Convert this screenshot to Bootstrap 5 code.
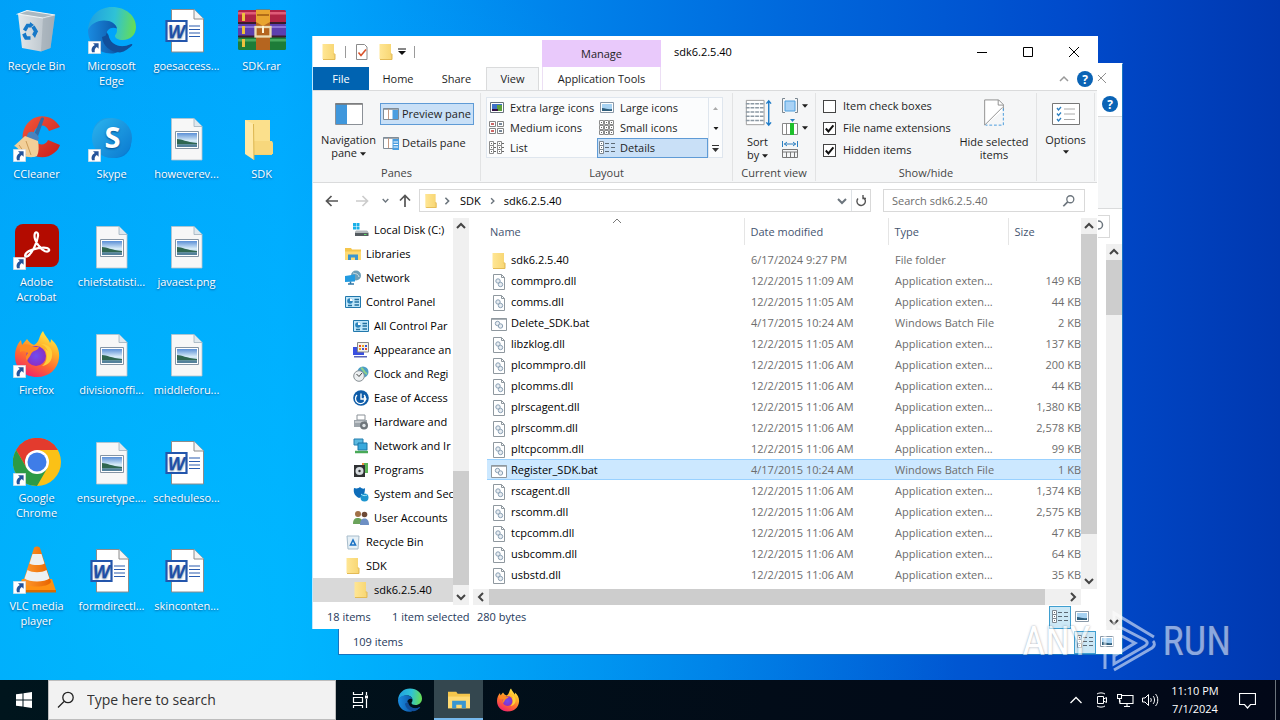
<!DOCTYPE html>
<html lang="en">
<head>
<meta charset="utf-8">
<meta name="viewport" content="width=device-width, initial-scale=1">
<title>Desktop</title>
<link href="https://cdn.jsdelivr.net/npm/bootstrap@5.3.0/dist/css/bootstrap.min.css" rel="stylesheet">
<style>
:root{--line:#dadbdc;--ribbon:#f5f6f7;--sel:#cce8ff;--pick:#c9e0f7;--pickline:#5f9bd6}
body{font-family:"Open Sans","Noto Sans",sans-serif;font-size:11px;line-height:16px;color:#1e1e1e;height:100vh;overflow:hidden;background:#0a8ff0}
button{background:none;border:0;padding:0;color:inherit;font-size:inherit;line-height:inherit}
svg{display:block;flex:none}
a{color:inherit;text-decoration:none}
.desk{background:radial-gradient(ellipse 60% 100% at 15% 90%,rgba(0,190,255,.75),transparent),linear-gradient(90deg,#009ff8 0,#00a6ff 22%,#008cf0 38%,#0068dc 62%,#004acb 84%,#0038b0 100%)}
/* desktop shortcuts */
.shortcuts{display:grid;grid-auto-flow:column;grid-template-rows:repeat(6,108px);grid-auto-columns:75px;justify-content:start}
.shortcut{display:flex;flex-direction:column;padding-top:6px;color:#fff;line-height:15px;text-shadow:0 1px 2px rgba(0,50,110,.7);white-space:nowrap}
.shortcut .pic{position:relative;width:48px;height:48px;margin:0 0 4px 13px}
.shortcut .pic .arrow{position:absolute;left:0;bottom:0}
.shortcut .title{width:100%;text-align:center;padding-right:2px}
/* windows */
.win{position:absolute;background:#fff}
.win-main{left:312px;top:36px;right:182px;bottom:51px;border-left:1px solid #bfe6fb;border-right:1px solid #fff}
.win-back{left:338px;top:63px;right:157px;bottom:25px;border:1px solid #1874c0;border-top-color:#fff}
.titlebar{height:31px;flex:none}
.manage{width:119px;height:27px;background:#e9c9fb;margin-top:4px}
.wintitle{padding-left:13px;color:#000}
.capbtn{width:46px;height:31px;display:grid;place-items:center}
.vline{width:1px;height:12px;background:#9a9a9a}
.tabs{height:23px;flex:none}
.tabs .tab{height:23px;padding:0;text-align:center}
.tab-file{width:56px;background:#0063b1;color:#fff}
.tab-on{width:53px;background:var(--ribbon);border:1px solid var(--line);border-bottom:0}
.tab-tool{width:119px;margin-left:3px;border:1px solid #ecdff4;border-top:0;border-bottom:0}
.ribbon{height:93px;flex:none;background:var(--ribbon);border-top:1px solid var(--line);border-bottom:1px solid var(--line)}
.group{position:relative;border-right:1px solid #e2e3e4;display:flex;flex-direction:column;margin:2px 0 1px}
.group-body{flex:1;display:flex}
.group-name{text-align:center;height:16px;color:#444;white-space:nowrap}
.big{display:flex;flex-direction:column;align-items:center;justify-content:flex-start;line-height:13px;text-align:center;padding-top:10px}
.big-tall{padding-top:6px}
.pane-btns{display:flex;flex-direction:column;gap:7px;padding-top:10px}
.pane-btn{width:94px;height:22px;display:flex;align-items:center;gap:3px;padding-left:2px;border:1px solid transparent;white-space:nowrap}
.pane-btn.on,.gal .on{background:var(--pick);border-color:var(--pickline)}
.gallery{width:237px;height:61px;border:1px solid #dfe6ee;background:#fbfcfd;margin:4px 0 0 5px}
.gal{display:grid;grid-template-columns:110px 111px;grid-template-rows:repeat(3,20px);flex:1}
.gal button{display:flex;align-items:center;gap:5px;padding-left:1px;border:1px solid transparent;white-space:nowrap;line-height:18px}
.gal-scroll{width:14px;border-left:1px solid #dfe6ee}
.gal-scroll button{display:grid;place-items:center;height:20px;width:13px}
.tick{appearance:none;width:13px;height:13px;border:1px solid #444;background:#fff;margin:0;flex:none}
.tick:checked{background:#fff url("data:image/svg+xml,%3Csvg xmlns='http://www.w3.org/2000/svg' viewBox='0 0 11 11'%3E%3Cpath d='M1.8 5.5 4.4 8.4 9.4 2.4' fill='none' stroke='%23111' stroke-width='2'/%3E%3C/svg%3E")}
.ticks{width:136px;padding:2px 0 0 7px}
.ticks label{display:flex;align-items:center;gap:7px;height:22px;white-space:nowrap}
.navrow{height:35px;flex:none;padding:6px 12px 0 0}
.addr{height:23px;border:1px solid #d9d9d9;color:#000}
.search{width:202px;height:23px;border:1px solid #d9d9d9}
.search input{border:0;outline:0;background:none;width:150px;padding:0 0 0 8px;color:#444}
.search input::placeholder{color:#6d6d6d;opacity:1}
.panes{flex:1 1 0;min-height:0;overflow:hidden}
.tree{width:140px;flex:none;overflow:hidden;color:#000}
.tree a{display:flex;align-items:center;gap:5px;height:24px;padding-left:32px;white-space:nowrap}
.tree a.sub{padding-left:40px}
.tree a.on{background:#d9d9d9}
.bar-v{width:16px;flex:none;background:#f0f0f0;display:flex;flex-direction:column;align-items:center;color:#444}
.bar-v .thumb{width:100%;background:#cdcdcd}
.bar-v button,.bar-h button{width:16px;height:16px;display:grid;place-items:center;flex:none}
.bar-h{height:16px;flex:none;background:#f0f0f0;display:flex;color:#444}
.bar-h .thumb{background:#cdcdcd}
.filepane{padding-left:14px}
.files{table-layout:fixed;margin:0;--bs-table-bg:transparent;border:0}
.files th{height:27px;padding:0 0 0 6px;font-weight:400;color:#44546f;border:0;border-right:1px solid #e5e5e5;vertical-align:middle}
.files th:first-child{padding-left:3px}
.files th:last-child{border:0}
.files tbody::before{content:"";display:block;height:4px}
.files td{height:21px;padding:0 0 0 7px;border:0;color:#6d6d6d;white-space:nowrap;line-height:19px;vertical-align:middle}
.files td:first-child{padding-left:4px;color:#000}
.files td:last-child{text-align:right;padding:0}
.files td svg{display:inline-block;margin-right:4px}
.files tr.on td{background:var(--sel);box-shadow:inset 0 1px #99d1ff,inset 0 -1px #99d1ff}
.status{height:24px;flex:none;color:#1e395b;padding-left:14px}
.viewbtn{width:22px;height:23px;display:grid;place-items:center;border:1px solid transparent}
.viewbtn.on{background:#cce8f6;border-color:#3f9fd0}
/* watermark */
.brand{position:absolute;right:49px;bottom:6px;color:#fff;opacity:.55;font-family:"Roboto Condensed","Open Sans Condensed","Roboto",sans-serif;font-size:40px;line-height:44px;text-shadow:0 0 2px #3c4a64}
/* taskbar */
.taskbar{height:40px;background:linear-gradient(90deg,#00151d,#020c18 60%,#020818);color:#fff;flex:none}
.taskbar button{height:40px;display:grid;place-items:center}
.startbtn{width:48px}
.tasksearch{width:288px;background:#f2f2f2;border:1px solid #bdbdbd}
.tasksearch input{border:0;outline:0;background:none;font-size:14px;line-height:22px;color:#333;width:230px;padding:0}
.tasksearch input::placeholder{color:#333;opacity:1}
.app{width:49px}
.app.on{background:#34474f;box-shadow:inset 0 -2px #76b9ed}
.clock{line-height:18px;text-align:center;width:64px}
</style>
</head>
<body class="d-flex flex-column">

<svg width="0" height="0" class="position-absolute" aria-hidden="true">
<defs>
<linearGradient id="gFold" x1="0" x2="1"><stop offset="0" stop-color="#ffe694"/><stop offset="1" stop-color="#f8d775"/></linearGradient>
<linearGradient id="gSky" x1="0" y1="0" x2="0" y2="1"><stop offset="0" stop-color="#5b8fd6"/><stop offset=".55" stop-color="#d8ecf8"/><stop offset="1" stop-color="#9cc3dc"/></linearGradient>
<linearGradient id="gEdge" x1="0" x2="1" y1=".3" y2=".4"><stop offset="0" stop-color="#1f9fe0"/><stop offset=".55" stop-color="#2fc2d6"/><stop offset="1" stop-color="#66dd55"/></linearGradient>
<linearGradient id="gEdge2" x1="0" x2="1"><stop offset="0" stop-color="#1a8be0"/><stop offset="1" stop-color="#0c55a6"/></linearGradient>
<linearGradient id="gFox" x1=".8" y1="0" x2=".3" y2="1"><stop offset="0" stop-color="#fff34a"/><stop offset=".35" stop-color="#ffb02a"/><stop offset=".65" stop-color="#ff6a30"/><stop offset="1" stop-color="#f0216c"/></linearGradient>
<radialGradient id="gFoxIn"><stop offset="0" stop-color="#6f4df0"/><stop offset="1" stop-color="#8a2fc4"/></radialGradient>
<linearGradient id="gSkype" x1="0" x2="1" y2="1"><stop offset="0" stop-color="#2bb4ee"/><stop offset="1" stop-color="#0a78cf"/></linearGradient>
<linearGradient id="gBin" x1="0" x2="1"><stop offset="0" stop-color="#e3e8eb"/><stop offset="1" stop-color="#aeb9c2"/></linearGradient>
<linearGradient id="gCone" x1="0" x2="1"><stop offset="0" stop-color="#ff9a2e"/><stop offset="1" stop-color="#e86400"/></linearGradient>
<linearGradient id="gCC" x1="0" x2="1" y2="1"><stop offset="0" stop-color="#f4573b"/><stop offset="1" stop-color="#c81e1a"/></linearGradient>
<symbol id="arrow" viewBox="0 0 13 13"><path fill="#fff" stroke="#c9d3dc" stroke-width=".6" d="M.3.3h12.4v12.4H.3z"/><path d="M5 2.200h5.600v5.600L8.800 6C6.800 7.200 6.400 9 6.800 11.200H4C2.800 8 4 5.500 6.800 4z" fill="#24549b"/></symbol>
<symbol id="recycle" viewBox="0 0 48 48"><path d="M5 8 14 4.500 42 9 37.500 42 28 45.500 9 42z" fill="url(#gBin)"/><path d="M5 8 14 4.500 42 9 30 12z" fill="#aab8c1" stroke="#eef3f5" stroke-width="1.200"/><path d="m30 12 12-3-4.500 33L28 45.500z" fill="#8f9ba5" opacity=".4"/><g fill="none" stroke="#1678c8" stroke-width="3.600"><path d="m11.500 24.500 3-5h4M20 20.500l3 5-2 3M17.500 32H13l-2-3.500"/></g><path d="m17 16 4 3-4.500 3zM24 27l-5 1 3 4zM9 28.500l4-2 .5 5z" fill="#1678c8"/></symbol>
<symbol id="edge" viewBox="0 0 48 48"><path fill="url(#gEdge)" d="M0 24C1 10 11 1 24 1c14 0 24 9 24 20 0 8-6 13-13 13-5 0-8-2-8-4 0-1.500 2-2 2-6 0-5-5-9-11-9C9 15 2 20 0 24z"/><path fill="url(#gEdge2)" d="M0 24c2-5 8-9.500 16-9.500 7 0 12 3.500 13 8C23 20 18 24 18 30c0 8 6 13 13 15-2 2-5 2.500-8 2.500C9 47 0 37 0 24z"/><path fill="#114f9b" d="M18.500 26c-3 10 3 17 13 18 5 .4 9-1.500 12-4 1.500-1.500.5-2.500-1-1.700C33 43 22 39 20.500 29z"/><path fill="#114f9b" d="M14 31c1 9 8 15 18 15.500 5-1 9.500-4 12.500-8.500-8 5-22 4-25-9z"/></symbol>
<symbol id="word" viewBox="1 0 48 48"><path d="M9.500 3.500H32l9.500 9.500v33H9.500z" fill="#fff" stroke="#8c8c8c"/><path d="M32 3.500V13h9.500" fill="#f4f4f4" stroke="#8c8c8c"/><path d="M27 20h11M27 23.500h11M27 27h11M27 30.500h11" stroke="#2a5cb0" stroke-width="1.200"/><path d="M4.500 15h20v20h-20z" fill="#fff" stroke="#2456ac" stroke-width="2.200"/><text x="14.500" y="31.500" text-anchor="middle" font-family="Liberation Sans" font-size="18" font-weight="700" font-style="italic" fill="#1f4fa8">W</text></symbol>
<symbol id="image" viewBox="1 0 48 48"><path d="M9.500 4.500H32l8 8V46H9.500z" fill="#f7f7f7" stroke="#b9c3ca" stroke-width=".8"/><path d="M32 4.500v8h8" fill="#dfe8ee" stroke="#9fb0bc" stroke-width=".8"/><path d="M13.500 17.500h23v17h-23z" fill="#fff" stroke="#8494a4"/><path d="M15 19h20v14H15z" fill="url(#gSky)"/><path d="M15 25c5 0 9 3 20 4v1.500H15z" fill="#2f6650"/><path d="M15 30.500h20V33H15z" fill="#54819b"/></symbol>
<symbol id="rar" viewBox="0 0 48 48"><rect y="4" width="48" height="13" rx="1.500" fill="#b02445"/><path d="M0 6h48v2.500H0z" fill="#df5c78"/><rect y="18" width="48" height="12" rx="1.500" fill="#5d3fae"/><path d="M0 20h48v2H0z" fill="#8d74d6"/><rect y="31" width="48" height="13" rx="1.500" fill="#1d7c38"/><path d="M0 33h48v2.500H0z" fill="#48a95e"/><path d="M0 16h48v2H0zM0 29.500h48v2H0z" fill="#3a1c2b"/><path d="M4 7h3v8H4zM4 20h3v8H4zM4 33h3v8H4z" fill="#eec23e"/><path d="M18 3.500h14v40.500H18z" fill="#b5651f"/><path d="M18 4h14v12l-7 4-7-4z" fill="#e9a52f"/><path d="M19 9h12" stroke="#9c5b12" stroke-width="1.500"/><rect x="17.500" y="21" width="15" height="9.500" fill="none" stroke="#ecdcb4" stroke-width="2.300"/><path d="M25 20v7" stroke="#fff6d8" stroke-width="2"/></symbol>
<symbol id="ccleaner" viewBox="0 0 48 48"><path d="M47 13C41 2 27-1 18 6 9 13 7 25 13 35c6 9 20 11 28 4 3-2 5-5 6-8l-12-5c-2 5-8 6-12 2-4-5-3-12 2-15 4-3 9-1 11 4z" fill="url(#gCC)"/><path d="M28 4c2-1 3 0 3 1L24 25l-4-2z" fill="#336ba6"/><path d="M15 19c4-3 9 0 11 5l-2 4-11-4z" fill="#4a83be"/><path d="M12 22 1 32c4 1 6 6 9 10 4 1 10 2 14 0 2-4 2-10 1-15z" fill="#f2cf98"/><path d="m6 31 7 10M13 27l5 14" stroke="#c99a58" fill="none"/></symbol>
<symbol id="skype" viewBox="0 0 48 48"><circle cx="20" cy="19" r="15" fill="#1e9fe4"/><circle cx="28" cy="29" r="15" fill="#0b7dd2"/><circle cx="24" cy="24" r="20" fill="url(#gSkype)"/><text x="24.500" y="34" text-anchor="middle" font-family="Open Sans" font-size="29" font-weight="700" fill="#fff">S</text></symbol>
<symbol id="folderbig" viewBox="2 0 48 48"><path d="M9 6h25v21l2 3v11H13z" fill="#f5d273"/><path d="M9 6h25v30H9z" fill="#fbe08c"/><path d="M34 27h2l1 2v11H18V27z" fill="#f7d77c"/><path d="m9 6 9 4v36l-9-6z" fill="#ffe9a6"/><path d="m17.500 10 .5 36" stroke="#dcb64e"/></symbol>
<symbol id="acrobat" viewBox="0 0 48 48"><rect x="2" y="2" width="44" height="43" rx="8" fill="#b30b00"/><path d="M21.500 14c0-5 4-5 3.500 0-.8 7-6 17-10 20-4 2-4-2 1-5 5-2.500 14-4 18-3 4 1.500 2 4.500-2 3.200-5-2.200-10.500-10.200-10.500-15.200z" fill="none" stroke="#fff" stroke-width="2.200"/></symbol>
<symbol id="firefox" viewBox="0 0 48 48"><path d="M30 1c2 5 6 8 7 12 1-2 1-3 .8-4C44 14 47 21 46 28c-1 11-10 19-22 19C11 47 2 38 2 26c0-7 3-13 6-16l1 5 5-6c2 3 4 5 7 6 2-1 4-3 5-6 1-3 2-6 4-8z" fill="url(#gFox)"/><circle cx="23" cy="26" r="10" fill="url(#gFoxIn)"/><path d="M7 16c5-3 10-2 13 1h6c-1 4-6 3-8 7-1 3-3 4-4 7-2-3-1-6 1-8-3-2-6-2-8-1z" fill="#ff8b22"/><path d="M24 14c5-1 9 2 11 7l-3-2c3 7 2 13-3 17 7-1 11-6 10-14-1-6-7-9-15-8z" fill="#ffcf3a"/></symbol>
<symbol id="chrome" viewBox="0 0 48 48"><circle cx="24" cy="24" r="24" fill="#fbc116"/><path d="M24 24 3.200 12A24 24 0 0 1 44.800 12H24z" fill="#e33b2e"/><path d="M24 24V12h20.800A24 24 0 0 0 3.200 12l10.400 18z" fill="#e33b2e"/><path d="M3.200 12A24 24 0 0 0 24 48l10.400-18L24 36 13.600 30z" fill="#2c9a46"/><circle cx="24" cy="24" r="12" fill="#fff"/><circle cx="24" cy="24" r="9.500" fill="#3f7de8"/></symbol>
<symbol id="vlc" viewBox="0 0 48 48"><path d="M9 33h30l4 12H5z" fill="#ff9112"/><path d="M5 44h38v2.500H5z" fill="#d96b00"/><path d="M21 2c1-2 5-2 6 0l11 34c-3 6-25 6-28 0z" fill="url(#gCone)"/><path d="M19.500 8h9l3 9.500c-3 2-12 2-15 0zM14.500 24c5 3 14 3 19 0l3 8.500c-5 4-20 4-25 0z" fill="#eef0f1"/></symbol>
<symbol id="folder" viewBox="0 0 16 16"><path d="M2 0h11v10l1 1v5H3z" fill="#f3cf6c"/><path d="M1.500 0h11.500v15H1.500z" fill="url(#gFold)"/><path d="M12.500 10h1.500v5.500H2" fill="none" stroke="#e3ba55"/></symbol>
<symbol id="props" viewBox="0 0 16 16"><path d="M2.500.5h8L13 3v12.500H2.500z" fill="#fff" stroke="#8b8b8b"/><path d="m4.500 8.500 2.500 3 5-6" fill="none" stroke="#d9532c" stroke-width="1.600"/></symbol>
<symbol id="dll" viewBox="0 0 16 16"><path d="M2.500.5h8L13.500 3.500v12h-11z" fill="#fff" stroke="#8f989f"/><path d="M10.500.5v3h3" fill="none" stroke="#8f989f"/><circle cx="7" cy="7" r="2.200" fill="#e8edf2" stroke="#8aa0b4"/><circle cx="9.500" cy="10.500" r="2.200" fill="#e8edf2" stroke="#8aa0b4"/></symbol>
<symbol id="bat" viewBox="0 0 16 16"><path d="M.5 2.500h15v12H.5z" fill="#fff" stroke="#8f989f"/><path d="M.5 3h15" stroke="#8f989f" stroke-width="1.500"/><circle cx="6.500" cy="7.500" r="2.200" fill="#e8edf2" stroke="#8aa0b4"/><circle cx="9.500" cy="10" r="2.200" fill="#e8edf2" stroke="#8aa0b4"/></symbol>
<symbol id="disk" viewBox="0 0 16 16"><path d="M0 1h3v3H0zM3.500 1h3v3h-3zM0 4.500h3v3H0zM3.500 4.500h3v3h-3z" fill="#19b0e8"/><path d="M3 9h11l1.500 2v3H2v-3z" fill="#555b60"/><path d="M3 8.500h11l1.500 2.500H2z" fill="#b5babd"/><path d="M11 12.500h2.500" stroke="#5ee06a"/></symbol>
<symbol id="libs" viewBox="0 0 16 16"><path d="M0 2h6l1 1.500h9V14H0z" fill="#f5c64c"/><path d="M0 5.500h16V14H0z" fill="#ffda73"/><path d="M3 14V8.500h10V14h-3v-2.500H6V14z" fill="#3a96d0"/></symbol>
<symbol id="net" viewBox="0 0 16 16"><circle cx="11" cy="5.500" r="5" fill="#6d9fb8"/><path d="M8 3c2 1 5 0 6 4" stroke="#cfe3ec" fill="none"/><path d="m0 6 10-1.500v7L0 12z" fill="#239be0"/><path d="M3 14h6M5.500 11.500V14" stroke="#3078a8" stroke-width="1.500"/></symbol>
<symbol id="cpl" viewBox="0 0 16 16"><path d="M.5 2.500h15v11H.5z" fill="#bfe6fa" stroke="#2278ac"/><circle cx="5" cy="7" r="2.800" fill="#2b83bb"/><path d="M5 7V4.200A2.800 2.800 0 0 1 7.800 7z" fill="#fff"/><path d="M9.500 5.500H14M9.500 8H14M9.500 11H14M3 11.500h4" stroke="#22709e" stroke-width="1.300"/></symbol>
<symbol id="appear" viewBox="0 0 16 16"><path d="M0 5h11v8H0z" fill="#3a4fe0"/><path d="M4.500.5h11v9.500h-11z" fill="#f5f3e8" stroke="#888"/><path d="M6 3h2v2H6zM12 6h2v2h-2z" fill="#e5472c"/><path d="M9 3h2v2H9zM6 6h2v2H6z" fill="#f0a020"/><path d="M12 3h2v2h-2zM9 6h2v2H9z" fill="#4053d0"/><path d="M1 14h13v1.500H1z" fill="#5964b8"/></symbol>
<symbol id="clocki" viewBox="0 0 16 16"><circle cx="10" cy="6" r="5.500" fill="#4c9dc6"/><path d="M8 2c3 1 2 4 6 6" stroke="#8fd08a" stroke-width="2" fill="none"/><circle cx="6" cy="10" r="5.300" fill="#eceff1" stroke="#878f94"/><path d="M3.500 8 6 10.500 9 7" fill="none" stroke="#444"/></symbol>
<symbol id="ease" viewBox="0 0 16 16"><circle cx="8" cy="8" r="7.800" fill="#0e5ca8"/><path d="M4 5a5 5 0 1 0 7 0M8 3.500V9h5M11 7l2 2-2 2" fill="none" stroke="#fff" stroke-width="1.300"/></symbol>
<symbol id="hard" viewBox="0 0 16 16"><path d="M4 1h8v5H4z" fill="#fff" stroke="#8b9298"/><path d="M1 6h13v7H1z" fill="#9da5ab"/><path d="M2 8h9" stroke="#e8eaec"/><circle cx="11" cy="11.500" r="4" fill="#6f767b"/><circle cx="11" cy="11.500" r="1.700" fill="#dfe5e8"/></symbol>
<symbol id="neti" viewBox="0 0 16 16"><path d="M1 1h9v6H1z" fill="#5bb9e0" stroke="#257fae"/><path d="M5 5h9v7H5z" fill="#39a9dc" stroke="#1b75a6"/><path d="M2 14h13" stroke="#49a957" stroke-width="2.500"/></symbol>
<symbol id="prog" viewBox="0 0 16 16"><path d="M9 1h5v6H9z" fill="#ef8b3c"/><path d="M11 1h4v10h-4z" fill="#5bb556"/><path d="M1 3h11v12H1z" fill="#303234"/><circle cx="6.500" cy="9" r="4" fill="#d7dcdf"/><circle cx="6.500" cy="9" r="1.200" fill="#303234"/></symbol>
<symbol id="sec" viewBox="0 0 16 16"><path d="M1 2c3 1 5 0 6-1 2 2 4 2 5 1 0 6-2 9-6 10C2 10 0 7 1 2z" fill="#0d6dba"/><circle cx="11.500" cy="11.500" r="4" fill="#1c95cf"/><path d="M8 8c2 2 4 2 6 1" stroke="#a8e4f8" fill="none"/></symbol>
<symbol id="users" viewBox="0 0 16 16"><circle cx="5" cy="4" r="3" fill="#a17148"/><path d="M0 14c0-5 2-6 5-6s5 2 5 6z" fill="#6ba35b"/><circle cx="11.500" cy="4.500" r="2.800" fill="#6d4a36"/><path d="M7 15c0-5 2-6.500 4.500-6.500S16 10 16 15z" fill="#6d8fc4"/></symbol>
<symbol id="bin16" viewBox="0 0 16 16"><path d="M2 2h12l-1 13H3z" fill="#e6f0f6" stroke="#a7bccb"/><path d="m5.500 11 2.500-5 2.500 5z" fill="none" stroke="#1b72c4" stroke-width="1.600"/></symbol>
<symbol id="preview" viewBox="0 0 16 14"><path d="M.5 1.500h15v11H.5z" fill="#fff" stroke="#7f8b96"/><path d="M.5 2h15" stroke="#7f8b96" stroke-width="1.500"/><path d="M9.500 3H15v9H9.500z" fill="#4b9ee0"/><path d="M5.500 2v10" stroke="#c59a83"/></symbol>
<symbol id="detailsp" viewBox="0 0 16 14"><path d="M.5 1.500h15v11H.5z" fill="#fff" stroke="#7f8b96"/><path d="M.5 2h15" stroke="#7f8b96" stroke-width="1.500"/><path d="M9.500 3H16v11H9.500z" fill="#4b9ee0"/><path d="M10.500 6H15M10.500 8.500H15M10.500 11H15" stroke="#fff"/><path d="M5.500 2v10" stroke="#c59a83"/></symbol>
<symbol id="pic1" viewBox="0 0 16 16"><path d="M1.500 2.500h13v10h-13z" fill="#fff" stroke="#66717c"/><path d="M3 4h10v7H3z" fill="#3f72c8"/><path d="M8 5h5v6H8z" fill="#5da13c"/><path d="M3 9h6v2H3z" fill="#314"/></symbol>
<symbol id="pic2" viewBox="0 0 16 16"><path d="M1.500 2.500h13v10h-13z" fill="#fff" stroke="#8a99a8"/><path d="M3 4h10v7H3z" fill="#a7d2f2"/><path d="M3 8c4 0 6 2 10 1v2H3z" fill="#2f5e7c"/></symbol>
<symbol id="med" viewBox="0 0 16 16"><path d="M.5 1.500h6v5h-6zM8.500 1.500h6v5h-6zM.5 8.500h6v5h-6zM8.500 8.500h6v5h-6z" fill="#fff" stroke="#858585"/><path d="M2 3h3v2H2zM2 10h3v2H2z" fill="#c66"/><path d="M10 3h3v2h-3zM10 10h3v2h-3z" fill="#789"/></symbol>
<symbol id="small" viewBox="0 0 16 16"><path d="M.5.5h4v4h-4zM5.500.5h4v4h-4zM10.500.5h4v4h-4zM.5 5.500h4v4h-4zM5.500 5.500h4v4h-4zM10.500 5.500h4v4h-4zM.5 10.500h4v4h-4zM5.500 10.500h4v4h-4zM10.500 10.500h4v4h-4z" fill="#fff" stroke="#8b8b8b"/><path d="M2 2.500h1M7 2.500h1M12 2.500h1M2 7.500h1M7 7.500h1M12 7.500h1M2 12.500h1M7 12.500h1M12 12.500h1" stroke="#666"/></symbol>
<symbol id="listi" viewBox="0 0 16 16"><path d="M.5 1.500h4v4h-4zM.5 5.500h4v4h-4zM.5 9.500h4v4h-4zM8.500 1.500h4v4h-4zM8.500 5.500h4v4h-4zM8.500 9.500h4v4h-4z" fill="#fff" stroke="#8b8b8b"/><path d="M5 3.500h2M5 7.500h2M5 11.500h2M13 3.500h2M13 7.500h2M13 11.500h2M2 3.500h1M2 7.500h1M2 11.500h1M10 3.500h1M10 7.500h1M10 11.500h1" stroke="#666"/></symbol>
<symbol id="deti" viewBox="0 0 16 16"><path d="M.5 1.500h4v4h-4zM.5 5.500h4v4h-4zM.5 9.500h4v4h-4z" fill="#fff" stroke="#7d8790"/><path d="M6 3.500h4M6 7.500h4M6 11.500h4M12 3.500h4M12 7.500h4M12 11.500h4M2 3.500h1M2 7.500h1M2 11.500h1" stroke="#5d6a75"/></symbol>
<symbol id="down" viewBox="0 0 7 4"><path d="M0 0h7L3.500 4z" fill="currentColor"/></symbol>
<symbol id="cup" viewBox="0 0 10 10"><path d="m1 7 4-4 4 4" fill="none" stroke="currentColor" stroke-width="2"/></symbol>
<symbol id="cdown" viewBox="0 0 10 10"><path d="m1 3 4 4 4-4" fill="none" stroke="currentColor" stroke-width="2"/></symbol>
<symbol id="cleft" viewBox="0 0 10 10"><path d="M7 1 3 5l4 4" fill="none" stroke="currentColor" stroke-width="2"/></symbol>
<symbol id="cright" viewBox="0 0 10 10"><path d="m3 1 4 4-4 4" fill="none" stroke="currentColor" stroke-width="2"/></symbol>
<symbol id="help" viewBox="0 0 16 16"><circle cx="8" cy="8" r="8" fill="#0a63b5"/><text x="8" y="12.500" text-anchor="middle" font-family="Open Sans" font-weight="700" font-size="12" fill="#fff">?</text></symbol>
<symbol id="mag" viewBox="0 0 16 16"><circle cx="9.500" cy="6" r="4" fill="none" stroke="currentColor" stroke-width="1.500"/><path d="m6.500 9-5 5" stroke="currentColor" stroke-width="2"/></symbol>
</defs>
</svg>

<main class="desk flex-grow-1 position-relative overflow-hidden">
  <div class="shortcuts">
    <button class="shortcut"><span class="pic"><svg width="48" height="48"><use href="#recycle"/></svg></span><span class="title">Recycle Bin</span></button>
    <button class="shortcut"><span class="pic"><svg width="48" height="48"><use href="#ccleaner"/></svg><svg class="arrow" width="13" height="13"><use href="#arrow"/></svg></span><span class="title">CCleaner</span></button>
    <button class="shortcut"><span class="pic"><svg width="48" height="48"><use href="#acrobat"/></svg><svg class="arrow" width="13" height="13"><use href="#arrow"/></svg></span><span class="title">Adobe<br>Acrobat</span></button>
    <button class="shortcut"><span class="pic"><svg width="48" height="48"><use href="#firefox"/></svg><svg class="arrow" width="13" height="13"><use href="#arrow"/></svg></span><span class="title">Firefox</span></button>
    <button class="shortcut"><span class="pic"><svg width="48" height="48"><use href="#chrome"/></svg><svg class="arrow" width="13" height="13"><use href="#arrow"/></svg></span><span class="title">Google<br>Chrome</span></button>
    <button class="shortcut"><span class="pic"><svg width="48" height="48"><use href="#vlc"/></svg><svg class="arrow" width="13" height="13"><use href="#arrow"/></svg></span><span class="title">VLC media<br>player</span></button>
    <button class="shortcut"><span class="pic"><svg width="48" height="48"><use href="#edge"/></svg><svg class="arrow" width="13" height="13"><use href="#arrow"/></svg></span><span class="title">Microsoft<br>Edge</span></button>
    <button class="shortcut"><span class="pic"><svg width="48" height="48"><use href="#skype"/></svg><svg class="arrow" width="13" height="13"><use href="#arrow"/></svg></span><span class="title">Skype</span></button>
    <button class="shortcut"><span class="pic"><svg width="48" height="48"><use href="#image"/></svg></span><span class="title">chiefstatisti...</span></button>
    <button class="shortcut"><span class="pic"><svg width="48" height="48"><use href="#image"/></svg></span><span class="title">divisionoffi...</span></button>
    <button class="shortcut"><span class="pic"><svg width="48" height="48"><use href="#image"/></svg></span><span class="title">ensuretype....</span></button>
    <button class="shortcut"><span class="pic"><svg width="48" height="48"><use href="#word"/></svg></span><span class="title">formdirectl...</span></button>
    <button class="shortcut"><span class="pic"><svg width="48" height="48"><use href="#word"/></svg></span><span class="title">goesaccess...</span></button>
    <button class="shortcut"><span class="pic"><svg width="48" height="48"><use href="#image"/></svg></span><span class="title">howeverev...</span></button>
    <button class="shortcut"><span class="pic"><svg width="48" height="48"><use href="#image"/></svg></span><span class="title">javaest.png</span></button>
    <button class="shortcut"><span class="pic"><svg width="48" height="48"><use href="#image"/></svg></span><span class="title">middleforu...</span></button>
    <button class="shortcut"><span class="pic"><svg width="48" height="48"><use href="#word"/></svg></span><span class="title">scheduleso...</span></button>
    <button class="shortcut"><span class="pic"><svg width="48" height="48"><use href="#word"/></svg></span><span class="title">skinconten...</span></button>
    <button class="shortcut"><span class="pic"><svg width="48" height="48"><use href="#rar"/></svg></span><span class="title">SDK.rar</span></button>
    <button class="shortcut"><span class="pic"><svg width="48" height="48"><use href="#folderbig"/></svg></span><span class="title">SDK</span></button>
  </div>

  <!-- window behind -->
  <section class="win win-back d-flex flex-column align-items-stretch">
    <div class="d-flex justify-content-end align-items-center pe-3" style="height:28px"><svg width="10" height="10" viewBox="0 0 10 10"><path d="m0 0 10 10M10 0 0 10" stroke="#8f8f8f"/></svg></div>
    <div class="d-flex justify-content-end align-items-center pe-1" style="height:24px"><svg width="16" height="16"><use href="#help"/></svg></div>
    <div class="ribbon"></div>
    <div class="navrow d-flex justify-content-end pe-2"><div class="search d-flex align-items-center justify-content-end pe-1 me-1"><svg class="text-secondary" width="16" height="16"><use href="#mag"/></svg></div></div>
    <div class="flex-grow-1 d-flex justify-content-end">
      <div class="bar-v mt-0"><button aria-label="Scroll up"><svg width="10" height="10"><use href="#cup"/></svg></button><div class="thumb" style="height:55px"></div><button class="mt-auto" aria-label="Scroll down"><svg width="10" height="10"><use href="#cdown"/></svg></button></div>
    </div>
    <div class="status d-flex align-items-center"><span class="flex-grow-1">109 items</span><span class="viewbtn on"><svg width="16" height="16"><use href="#deti"/></svg></span><span class="viewbtn me-1"><svg width="16" height="16"><use href="#pic2"/></svg></span></div>
  </section>

  <!-- active window -->
  <section class="win win-main d-flex flex-column">
    <div class="titlebar d-flex align-items-center">
      <svg class="ms-2" width="16" height="16"><use href="#folder"/></svg>
      <span class="vline mx-2"></span>
      <svg width="16" height="16"><use href="#props"/></svg>
      <svg class="ms-2" width="16" height="16"><use href="#folder"/></svg>
      <svg class="ms-1" width="8" height="7" viewBox="0 0 8 7"><path d="M0 1h8" stroke="#111"/><path d="M0 3h8L4 7z" fill="#111"/></svg>
      <span class="vline ms-2"></span>
      <span class="flex-fill" style="max-width:127px"></span>
      <div class="manage d-flex align-items-center justify-content-center">Manage</div>
      <span class="wintitle">sdk6.2.5.40</span>
      <button class="capbtn ms-auto" aria-label="Minimize"><svg width="10" height="10" viewBox="0 0 10 10"><path d="M0 5.500h10" stroke="#000"/></svg></button>
      <button class="capbtn" aria-label="Maximize"><svg width="10" height="10" viewBox="0 0 10 10"><path d="M.5.5h9v9h-9z" fill="none" stroke="#000"/></svg></button>
      <button class="capbtn" aria-label="Close"><svg width="10" height="10" viewBox="0 0 10 10"><path d="m0 0 10 10M10 0 0 10" stroke="#000"/></svg></button>
    </div>
    <div class="tabs d-flex align-items-center">
      <button class="tab tab-file">File</button>
      <button class="tab" style="width:58px">Home</button>
      <button class="tab" style="width:59px">Share</button>
      <button class="tab tab-on">View</button>
      <button class="tab tab-tool">Application Tools</button>
      <svg class="ms-auto" width="10" height="10" viewBox="0 0 10 10"><path d="m1 7 4-4 4 4" fill="none" stroke="#999" stroke-width="1.500"/></svg>
      <svg class="ms-2 me-1" width="16" height="16"><use href="#help"/></svg>
    </div>
    <div class="ribbon d-flex">
      <div class="group" style="width:168px">
        <div class="group-body">
          <button class="big ps-1" style="width:67px"><svg class="mb-2" width="28" height="22" viewBox="0 0 28 22"><path d="M.5.500h27v21H.5z" fill="#fff" stroke="#8b9097"/><path d="M1 1h11v20H1z" fill="#3f97dc"/><path d="M.5 1h27" stroke="#777" stroke-width="1.500"/></svg>Navigation<span>pane <svg class="d-inline" width="6" height="4"><use href="#down"/></svg></span></button>
          <div class="pane-btns"><button class="pane-btn on"><svg width="16" height="14"><use href="#preview"/></svg>Preview pane</button><button class="pane-btn"><svg width="16" height="14"><use href="#detailsp"/></svg>Details pane</button></div>
        </div>
        <div class="group-name">Panes</div>
      </div>
      <div class="group" style="width:252px">
        <div class="gallery d-flex flex-shrink-0">
          <div class="gal">
            <button><svg width="16" height="16"><use href="#pic1"/></svg>Extra large icons</button><button><svg width="16" height="16"><use href="#pic2"/></svg>Large icons</button>
            <button><svg width="16" height="16"><use href="#med"/></svg>Medium icons</button><button><svg width="16" height="16"><use href="#small"/></svg>Small icons</button>
            <button><svg width="16" height="16"><use href="#listi"/></svg>List</button><button class="on"><svg width="16" height="16"><use href="#deti"/></svg>Details</button>
          </div>
          <div class="gal-scroll"><button aria-label="Up"><svg width="5" height="3" viewBox="0 0 5 3"><path d="M0 3h5L2.500 0z" fill="#aaa"/></svg></button><button aria-label="Down"><svg width="6" height="3" viewBox="0 0 7 4"><use href="#down"/></svg></button><button aria-label="More"><svg width="7" height="7" viewBox="0 0 7 7"><path d="M0 .5h7" stroke="#333"/><path d="M0 3h7L3.500 7z" fill="#333"/></svg></button></div>
        </div>
        <div class="group-name mt-auto">Layout</div>
      </div>
      <div class="group" style="width:83px">
        <div class="group-body">
          <button class="big big-tall" style="width:49px"><svg class="mb-2" width="28" height="28" viewBox="0 0 28 30"><path d="M1.500 1.500h19v26h-19z" fill="#fff" stroke="#999"/><path d="M1 5h20M1 9.500h20M1 14h20M1 18.500h20M1 23h20" stroke="#8c99a4" stroke-width="1.600" stroke-dasharray="4 1"/><path d="M25.500 2v26M23 5l2.500-3L28 5M23 25l2.500 3 2.500-3" fill="none" stroke="#1f7cc8" stroke-width="1.500"/></svg>Sort<span>by <svg class="d-inline" width="6" height="4"><use href="#down"/></svg></span></button>
          <div class="d-flex flex-column gap-1 pt-1">
            <button class="d-flex align-items-center gap-1" aria-label="Group by"><svg width="16" height="18" viewBox="0 0 16 18"><path d="M3 4h10v10H3z" fill="#a9d2f5" stroke="#4e9fdd"/><path d="M3 1.500H.5v14H3M13 1.500h2.500v14H13" fill="none" stroke="#7b8790"/></svg><svg width="6" height="4"><use href="#down"/></svg></button>
            <button class="d-flex align-items-center gap-1" aria-label="Add columns"><svg width="16" height="18" viewBox="0 0 16 18"><path d="M.5 4.500h15v11H.5zM4.500 4v12" fill="#fff" stroke="#888"/><path d="M8 4h4v12H8z" fill="#1fc02c"/><path d="M8 0h5l-2.500 3z" fill="#2c7fc0"/></svg><svg width="6" height="4"><use href="#down"/></svg></button>
            <button class="d-flex" aria-label="Size columns"><svg width="16" height="18" viewBox="0 0 16 18"><path d="M.5 0v6M15.500 0v6M2 3h12M5 1 2.500 3 5 5M11 1l2.500 2L11 5" fill="none" stroke="#2c7fc0"/><path d="M.5 8.500h15v8H.5zM0 11h16M4.500 11v6M8.500 11v6M12.500 11v6" fill="none" stroke="#777"/></svg></button>
          </div>
        </div>
        <div class="group-name">Current view</div>
      </div>
      <div class="group" style="width:221px">
        <div class="group-body">
          <div class="ticks">
            <label><input class="tick" type="checkbox">Item check boxes</label>
            <label><input class="tick" type="checkbox" checked>File name extensions</label>
            <label><input class="tick" type="checkbox" checked>Hidden items</label>
          </div>
          <button class="big big-tall text-nowrap flex-fill"><svg class="mb-2" width="22" height="28" viewBox="0 0 22 30"><path d="M1 28V1h15l5 5v6" fill="#fff" stroke="#8b8b8b"/><path d="M15.500 1v5.500H21M1 28 20 9" fill="none" stroke="#8b8b8b"/><path d="M21 10v18H2" fill="none" stroke="#3f97dc" stroke-dasharray="3 2"/></svg>Hide selected<br>items</button>
        </div>
        <div class="group-name">Show/hide</div>
      </div>
      <div class="group" style="width:58px">
        <button class="big"><svg class="mb-2" width="28" height="22" viewBox="0 0 28 22"><path d="M.5.5h27v21H.5z" fill="#fff" stroke="#777"/><path d="m5 5 1.500 2L9 4M5 10.500l1.500 2L9 9.500M5 16l1.500 2L9 15" fill="none" stroke="#2c7fc0" stroke-width="1.300"/><path d="M12 6h11M12 11h11M12 16.500h11" stroke="#aaa"/></svg>Options<svg class="mt-1" width="6" height="4"><use href="#down"/></svg></button>
      </div>
    </div>
    <div class="navrow d-flex">
      <div class="d-flex align-items-center justify-content-between ps-2 pe-2 text-secondary" style="width:106px;height:23px">
        <svg class="ms-1" width="13" height="12" viewBox="0 0 13 12"><path d="M13 6H1.500M6.500 1l-5 5 5 5" fill="none" stroke="#555" stroke-width="1.700"/></svg>
        <svg class="ms-2" width="13" height="12" viewBox="0 0 13 12"><path d="M0 6h11.500M6.500 1l5 5-5 5" fill="none" stroke="#ccc" stroke-width="1.700"/></svg>
        <svg class="ms-1" width="7" height="7" viewBox="0 0 10 10"><use href="#cdown"/></svg>
        <svg width="12" height="13" viewBox="0 0 12 13"><path d="M6 13V1.500M1 6.500l5-5 5 5" fill="none" stroke="#555" stroke-width="1.700"/></svg>
      </div>
      <nav class="addr d-flex align-items-center flex-grow-1 ps-1 me-1" aria-label="Path">
        <svg width="14" height="16" viewBox="0 0 16 16"><use href="#folder"/></svg>
        <svg class="ms-1 me-2 text-secondary" width="10" height="8"><use href="#cright"/></svg><a href="#">SDK</a>
        <svg class="ms-2 me-2 text-secondary" width="7" height="8"><use href="#cright"/></svg><a href="#">sdk6.2.5.40</a>
        <svg class="ms-auto me-1 text-secondary" width="10" height="10"><use href="#cdown"/></svg>
        <span class="border-start h-100 d-flex align-items-center px-1"><svg width="10" height="12" viewBox="0 0 10 12"><path d="M7 2.500A4.200 4.200 0 1 1 2 3.500M7 0v3.500h3.500" fill="none" stroke="#555" stroke-width="1.400"/></svg></span>
      </nav>
      <div class="search d-flex align-items-center justify-content-between ms-2 pe-2"><input type="search" placeholder="Search sdk6.2.5.40" aria-label="Search sdk6.2.5.40"><svg class="text-secondary" width="14" height="14" viewBox="0 0 16 16"><use href="#mag"/></svg></div>
    </div>
    <div class="panes d-flex">
      <nav class="tree" aria-label="Folders">
        <a class="sub" href="#"><svg width="16" height="16"><use href="#disk"/></svg>Local Disk (C:)</a>
        <a href="#"><svg width="16" height="16"><use href="#libs"/></svg>Libraries</a>
        <a href="#"><svg width="16" height="16"><use href="#net"/></svg>Network</a>
        <a href="#"><svg width="16" height="16"><use href="#cpl"/></svg>Control Panel</a>
        <a class="sub" href="#"><svg width="16" height="16"><use href="#cpl"/></svg>All Control Par</a>
        <a class="sub" href="#"><svg width="16" height="16"><use href="#appear"/></svg>Appearance an</a>
        <a class="sub" href="#"><svg width="16" height="16"><use href="#clocki"/></svg>Clock and Regi</a>
        <a class="sub" href="#"><svg width="16" height="16"><use href="#ease"/></svg>Ease of Access</a>
        <a class="sub" href="#"><svg width="16" height="16"><use href="#hard"/></svg>Hardware and</a>
        <a class="sub" href="#"><svg width="16" height="16"><use href="#neti"/></svg>Network and Ir</a>
        <a class="sub" href="#"><svg width="16" height="16"><use href="#prog"/></svg>Programs</a>
        <a class="sub" href="#"><svg width="16" height="16"><use href="#sec"/></svg>System and Sec</a>
        <a class="sub" href="#"><svg width="16" height="16"><use href="#users"/></svg>User Accounts</a>
        <a href="#"><svg width="16" height="16"><use href="#bin16"/></svg>Recycle Bin</a>
        <a href="#"><svg width="16" height="16"><use href="#folder"/></svg>SDK</a>
        <a class="sub on" href="#"><svg width="16" height="16"><use href="#folder"/></svg>sdk6.2.5.40</a>
      </nav>
      <div class="bar-v"><button aria-label="Scroll up"><svg width="10" height="10"><use href="#cup"/></svg></button><div class="thumb mt-auto" style="height:114px"></div><button class="mt-1" aria-label="Scroll down"><svg width="10" height="10"><use href="#cdown"/></svg></button></div>
      <div class="flex-grow-1 ms-1 d-flex flex-column overflow-hidden">
        <div class="panes d-flex">
          <div class="filepane flex-grow-1 position-relative overflow-hidden">
            <svg class="position-absolute" style="left:23%" width="8" height="5" viewBox="0 0 8 5"><path d="m0 5 4-4 4 4" fill="none" stroke="#777"/></svg>
            <table class="table files">
              <colgroup><col><col style="width:144px"><col style="width:120px"><col style="width:73px"></colgroup>
              <thead><tr><th>Name</th><th>Date modified</th><th>Type</th><th>Size</th></tr></thead>
              <tbody>
                <tr><td><svg width="16" height="16"><use href="#folder"/></svg>sdk6.2.5.40</td><td>6/17/2024 9:27 PM</td><td>File folder</td><td></td></tr>
                <tr><td><svg width="16" height="16"><use href="#dll"/></svg>commpro.dll</td><td>12/2/2015 11:09 AM</td><td>Application exten...</td><td>149 KB</td></tr>
                <tr><td><svg width="16" height="16"><use href="#dll"/></svg>comms.dll</td><td>12/2/2015 11:05 AM</td><td>Application exten...</td><td>44 KB</td></tr>
                <tr><td><svg width="16" height="16"><use href="#bat"/></svg>Delete_SDK.bat</td><td>4/17/2015 10:24 AM</td><td>Windows Batch File</td><td>2 KB</td></tr>
                <tr><td><svg width="16" height="16"><use href="#dll"/></svg>libzklog.dll</td><td>12/2/2015 11:05 AM</td><td>Application exten...</td><td>137 KB</td></tr>
                <tr><td><svg width="16" height="16"><use href="#dll"/></svg>plcommpro.dll</td><td>12/2/2015 11:06 AM</td><td>Application exten...</td><td>200 KB</td></tr>
                <tr><td><svg width="16" height="16"><use href="#dll"/></svg>plcomms.dll</td><td>12/2/2015 11:06 AM</td><td>Application exten...</td><td>44 KB</td></tr>
                <tr><td><svg width="16" height="16"><use href="#dll"/></svg>plrscagent.dll</td><td>12/2/2015 11:06 AM</td><td>Application exten...</td><td>1,380 KB</td></tr>
                <tr><td><svg width="16" height="16"><use href="#dll"/></svg>plrscomm.dll</td><td>12/2/2015 11:06 AM</td><td>Application exten...</td><td>2,578 KB</td></tr>
                <tr><td><svg width="16" height="16"><use href="#dll"/></svg>pltcpcomm.dll</td><td>12/2/2015 11:06 AM</td><td>Application exten...</td><td>99 KB</td></tr>
                <tr class="on"><td><svg width="16" height="16"><use href="#bat"/></svg>Register_SDK.bat</td><td>4/17/2015 10:24 AM</td><td>Windows Batch File</td><td>1 KB</td></tr>
                <tr><td><svg width="16" height="16"><use href="#dll"/></svg>rscagent.dll</td><td>12/2/2015 11:06 AM</td><td>Application exten...</td><td>1,374 KB</td></tr>
                <tr><td><svg width="16" height="16"><use href="#dll"/></svg>rscomm.dll</td><td>12/2/2015 11:06 AM</td><td>Application exten...</td><td>2,575 KB</td></tr>
                <tr><td><svg width="16" height="16"><use href="#dll"/></svg>tcpcomm.dll</td><td>12/2/2015 11:06 AM</td><td>Application exten...</td><td>47 KB</td></tr>
                <tr><td><svg width="16" height="16"><use href="#dll"/></svg>usbcomm.dll</td><td>12/2/2015 11:06 AM</td><td>Application exten...</td><td>64 KB</td></tr>
                <tr><td><svg width="16" height="16"><use href="#dll"/></svg>usbstd.dll</td><td>12/2/2015 11:06 AM</td><td>Application exten...</td><td>35 KB</td></tr>
                <tr><td><svg width="16" height="16"><use href="#dll"/></svg></td><td></td><td></td><td></td></tr>
              </tbody>
            </table>
          </div>
          <div class="bar-v"><button aria-label="Scroll up"><svg width="10" height="10"><use href="#cup"/></svg></button><div class="thumb" style="height:300px"></div><button class="mt-auto" aria-label="Scroll down"><svg width="10" height="10"><use href="#cdown"/></svg></button></div>
        </div>
        <div class="bar-h me-3"><button aria-label="Scroll left"><svg width="10" height="10"><use href="#cleft"/></svg></button><div class="thumb flex-grow-1 me-3"></div><button class="ms-1" aria-label="Scroll right"><svg width="10" height="10"><use href="#cright"/></svg></button></div>
      </div>
    </div>
    <div class="status d-flex align-items-center"><span style="width:65px" class="text-nowrap">18 items</span><span style="width:85px" class="text-nowrap">1 item selected</span><span class="flex-grow-1">280 bytes</span><button class="viewbtn on" aria-label="Details"><svg width="16" height="16"><use href="#deti"/></svg></button><button class="viewbtn me-1" aria-label="Large icons"><svg width="16" height="16"><use href="#pic2"/></svg></button></div>
  </section>

  <div class="brand d-flex align-items-center">ANY<svg class="ms-2 me-1" width="60" height="64" viewBox="0 0 60 64"><path d="M15 46V3l40 24M6 16v43M15 60l38-22c3-2 3-5 1-7M19 16l27 14c3 2 3 4 0 6L15 54v-8l21-13-17-9" fill="none" stroke="#fff" stroke-width="3"/></svg>RUN</div>
</main>

<footer class="taskbar d-flex">
  <button class="startbtn" aria-label="Start"><svg width="16" height="16" viewBox="0 0 16 16"><path d="M0 2.300 6.500 1.400V7.500H0zM7.500 1.300 16 0v7.500H7.500zM0 8.500h6.500v6.100L0 13.700zM7.500 8.500H16V16l-8.500-1.300z" fill="#fff"/></svg></button>
  <div class="tasksearch d-flex align-items-center gap-2"><svg class="ms-2 me-1" width="18" height="18" viewBox="0 0 18 18"><circle cx="11" cy="6.500" r="5.200" fill="none" stroke="#222" stroke-width="1.300"/><path d="m7 10.500-6 6" stroke="#222" stroke-width="1.300"/></svg><input type="search" placeholder="Type here to search" aria-label="Type here to search"></div>
  <button class="app" aria-label="Task view"><svg width="17" height="16" viewBox="0 0 17 16"><path d="M1.500 0v2.500h9V0M1.500 5.500h9v5h-9zM1.500 16v-2.500h9V16M14.500 0v3M14.500 7v9" fill="none" stroke="#fff" stroke-width="1.200"/><path d="M13 3.500h3v3h-3z" fill="#fff"/></svg></button>
  <button class="app" aria-label="Microsoft Edge"><svg width="24" height="24" viewBox="0 0 48 48"><use href="#edge"/></svg></button>
  <button class="app on" aria-label="File Explorer"><svg width="22" height="22" viewBox="0 0 16 16"><use href="#libs"/></svg></button>
  <button class="app" aria-label="Firefox"><svg width="24" height="24" viewBox="0 0 48 48"><use href="#firefox"/></svg></button>
  <div class="ms-auto d-flex align-items-center">
    <svg class="me-2" width="14" height="8" viewBox="0 0 14 8"><path d="m1.500 7 5.500-5.500L12.500 7" fill="none" stroke="#fff" stroke-width="1.300"/></svg>
    <svg class="me-2 ms-1" width="14" height="16" viewBox="0 0 14 16"><path d="M2.500 4.500h6v7h-6zM8.500 7l3-1.500v5l-3-1.500M2 2c2-1.500 6-1.500 8 0M2 14c2 1.500 6 1.500 8 0" fill="none" stroke="#fff"/></svg>
    <svg class="me-2" width="17" height="15" viewBox="0 0 17 15"><path d="M5 2.500h11v8H3V7M7 13.500h6M10 10.500v3M.5 1.500h4v4h-4zM2.500 5.500v4" fill="none" stroke="#fff" stroke-width="1.100"/></svg>
    <svg width="17" height="14" viewBox="0 0 17 14"><path d="M.5 5H3l3.500-3.500v11L3 9H.5zM8.500 5c1 1 1 3 0 4M11 3c2 2 2 6 0 8M13.500 1c3 3 3 9 0 12" fill="none" stroke="#fff"/></svg>
    <div class="clock ms-1">11:10 PM<br>7/1/2024</div>
    <button style="width:40px" aria-label="Notifications"><svg width="17" height="17" viewBox="0 0 17 17"><path d="M.5 1.500h16v11h-5L8.500 16l-3-3.500h-5z" fill="none" stroke="#fff" stroke-width="1.200"/></svg></button>
    <span class="border-start border-secondary h-100 ms-2 pe-1"></span>
  </div>
</footer>
<script src="https://cdn.jsdelivr.net/npm/bootstrap@5.3.0/dist/js/bootstrap.bundle.min.js"></script>
</body>
</html>
